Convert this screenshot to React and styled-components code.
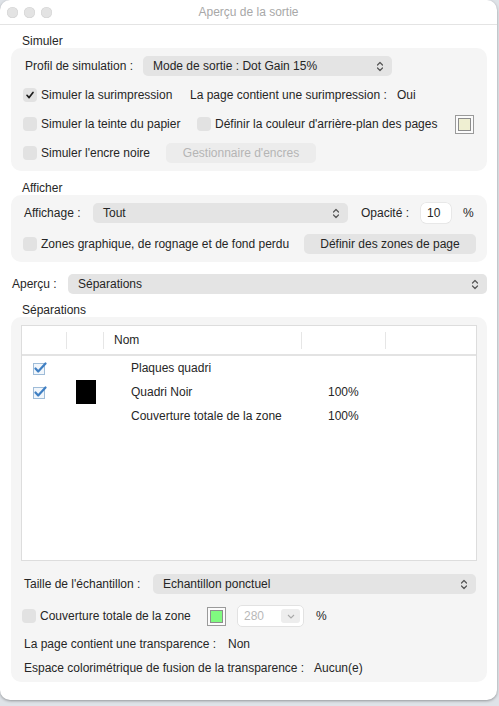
import React from "react";
import styled, { createGlobalStyle } from "styled-components";

const Global = createGlobalStyle`
  html, body { margin: 0; padding: 0; }
  body {
    background: #dfe3e8;
    font-family: "Liberation Sans", Arial, sans-serif;
    font-size: 12px;
    color: #262626;
    width: 499px;
    height: 706px;
    overflow: hidden;
  }
`;

const Window = styled.div`
  width: 497px;
  height: 700px;
  background: #ffffff;
  border-radius: 10px;
  box-shadow: 0 1px 3px rgba(0,0,0,0.35);
  display: flex;
  flex-direction: column;
  overflow: hidden;
`;

const TitleBar = styled.div`
  height: 24px;
  flex: none;
  border-bottom: 1px solid #e4e4e4;
  display: flex;
  align-items: center;
  position: relative;
  padding-left: 7px;
`;

const Lights = styled.div`
  display: flex;
  gap: 6px;
`;

const Light = styled.span`
  width: 11px;
  height: 11px;
  border-radius: 50%;
  background: #e3e3e3;
  box-shadow: inset 0 0 0 0.5px #d2d2d2;
`;

const Title = styled.div`
  flex: 1;
  text-align: center;
  color: #a8a8a8;
  font-size: 12px;
  margin-right: 52px;
`;

const Content = styled.div`
  display: flex;
  flex-direction: column;
  padding: 0 10px 0 11px;
`;

const SectionLabel = styled.div`
  height: 13px;
  line-height: 13px;
  margin-top: ${(p) => p.$mt || 11}px;
  padding-left: ${(p) => p.$pl ?? 11}px;
`;

const Group = styled.div`
  background: #f5f5f5;
  border-radius: 10px;
  padding: 8px 12px ${(p) => p.$pb || 8}px 12px;
  display: flex;
  flex-direction: column;
  gap: ${(p) => p.$gap || 9}px;
  margin-top: ${(p) => p.$mt || 0}px;
`;

const Row = styled.div`
  height: ${(p) => p.$h || 20}px;
  display: flex;
  align-items: center;
  padding-left: ${(p) => p.$pl || 0}px;
`;

const Text = styled.span`
  white-space: nowrap;
  width: ${(p) => (p.$w ? p.$w + "px" : "auto")};
  flex: none;
  color: ${(p) => (p.$muted ? "#b0b0b0" : "inherit")};
`;

const Select = styled.div`
  height: 20px;
  width: ${(p) => (p.$w ? p.$w + "px" : "auto")};
  flex: ${(p) => (p.$w ? "none" : "1")};
  background: #e4e4e4;
  border-radius: 5px;
  display: flex;
  align-items: center;
  padding: 0 8px 0 10px;
  box-sizing: border-box;
  justify-content: space-between;
`;

const Chevrons = () => (
  <svg width="8" height="11" viewBox="0 0 8 11">
    <path d="M1.5 4 L4 1.5 L6.5 4 M1.5 7 L4 9.5 L6.5 7" fill="none" stroke="#555" strokeWidth="1.2" strokeLinecap="round" strokeLinejoin="round" />
  </svg>
);

const Box = styled.span`
  width: 14px;
  height: 14px;
  border-radius: 4px;
  background: #e2e2e2;
  flex: none;
  display: flex;
  align-items: center;
  justify-content: center;
  margin-right: 4px;
`;

const Check = ({ on }) => (
  <Box>
    {on && (
      <svg width="10" height="10" viewBox="0 0 10 10">
        <path d="M2 5.3 L4.1 7.6 L8 2.4" fill="none" stroke="#1e1e1e" strokeWidth="1.7" strokeLinecap="round" strokeLinejoin="round" />
      </svg>
    )}
  </Box>
);

const Button = styled.div`
  height: 20px;
  width: ${(p) => p.$w}px;
  background: ${(p) => (p.$disabled ? "#ececec" : "#e4e4e4")};
  color: ${(p) => (p.$disabled ? "#b5b5b5" : "#262626")};
  border-radius: 5px;
  display: flex;
  align-items: center;
  justify-content: center;
  flex: none;
`;

const Swatch = styled.span`
  width: 19px;
  height: 19px;
  box-sizing: border-box;
  border: 1px solid #9a9a9a;
  background: #fbfbfb;
  display: flex;
  align-items: center;
  justify-content: center;
  flex: none;
  &::after {
    content: "";
    width: 11px;
    height: 11px;
    background: ${(p) => p.$color};
    border: 1px solid #8c8c8c;
  }
`;

const NumInput = styled.div`
  width: 30px;
  height: 20px;
  background: #fff;
  border-radius: 5px;
  box-shadow: 0 0 0 0.5px #dcdcdc;
  box-sizing: border-box;
  padding-left: 6px;
  display: flex;
  align-items: center;
  flex: none;
`;

const Combo = styled.div`
  width: 67px;
  height: 22px;
  border: 1px solid #e2e2e2;
  border-radius: 5px;
  background: #fff;
  box-sizing: border-box;
  display: flex;
  align-items: center;
  padding: 0 3px 0 6px;
  justify-content: space-between;
  color: #b8b8b8;
  flex: none;
`;

const ComboBtn = styled.span`
  width: 19px;
  height: 14px;
  background: #ededed;
  border-radius: 3px;
  display: flex;
  align-items: center;
  justify-content: center;
`;

const Table = styled.div`
  height: 236px;
  background: #fff;
  border: 1px solid #dddddd;
  box-sizing: border-box;
  display: flex;
  flex-direction: column;
  margin: 0 -1px;
`;

const Header = styled.div`
  height: 28px;
  display: flex;
  align-items: center;
  border-bottom: 2px solid #e3e3e3;
  flex: none;
`;

const HeadCell = styled.div`
  width: ${(p) => (p.$w ? p.$w + "px" : "auto")};
  flex: ${(p) => (p.$w ? "none" : "1")};
  height: 17px;
  box-sizing: border-box;
  border-right: ${(p) => (p.$last ? "none" : "1px solid #e6e6e6")};
  padding-left: ${(p) => p.$pl || 0}px;
  display: flex;
  align-items: center;
`;

const TRow = styled.div`
  height: 24px;
  display: flex;
  align-items: center;
  flex: none;
`;

const Cell = styled.div`
  width: ${(p) => p.$w}px;
  flex: none;
  height: 24px;
  display: flex;
  align-items: center;
  padding-left: ${(p) => p.$pl || 0}px;
  box-sizing: border-box;
  white-space: nowrap;
`;

const InkSwatch = styled.span`
  width: 20px;
  height: 24px;
  background: #000;
`;

const BlueCheck = () => (
  <svg width="14" height="13" viewBox="0 0 14 13">
    <rect x="0.5" y="1.5" width="11" height="11" fill="#f1f6fb" stroke="#9fbcd8" />
    <path d="M2.5 6.5 L5.2 9.5 L12.5 1.5" fill="none" stroke="#3f7fc3" strokeWidth="2.2" strokeLinecap="round" strokeLinejoin="round" />
  </svg>
);

const Spacer = styled.span`
  width: ${(p) => p.$w}px;
  flex: none;
`;

export default function App() {
  return (
    <>
      <Global />
      <Window>
        <TitleBar>
          <Lights>
            <Light />
            <Light />
            <Light />
          </Lights>
          <Title>Aperçu de la sortie</Title>
        </TitleBar>
        <Content>
          <SectionLabel $mt={10}>Simuler</SectionLabel>
          <Group>
            <Row $pl={2}>
              <Text $w={118}>Profil de simulation :</Text>
              <Select $w={249}>
                <span>Mode de sortie : Dot Gain 15%</span>
                <Chevrons />
              </Select>
            </Row>
            <Row>
              <Check on />
              <Text $w={149}>Simuler la surimpression</Text>
              <Text $w={207}>La page contient une surimpression :</Text>
              <Text>Oui</Text>
            </Row>
            <Row>
              <Check />
              <Text $w={156}>Simuler la teinte du papier</Text>
              <Check />
              <Text $w={240}>Définir la couleur d'arrière-plan des pages</Text>
              <Swatch $color="#efefd2" />
            </Row>
            <Row>
              <Check />
              <Text $w={125}>Simuler l'encre noire</Text>
              <Button $w={150} $disabled>Gestionnaire d'encres</Button>
            </Row>
          </Group>

          <SectionLabel>Afficher</SectionLabel>
          <Group $gap={11}>
            <Row $pl={1}>
              <Text $w={69}>Affichage :</Text>
              <Select $w={255}>
                <span>Tout</span>
                <Chevrons />
              </Select>
              <Spacer $w={13} />
              <Text $w={60}>Opacité :</Text>
              <NumInput>10</NumInput>
              <Spacer $w={12} />
              <Text>%</Text>
            </Row>
            <Row>
              <Check />
              <Text $w={263}>Zones graphique, de rognage et de fond perdu</Text>
              <Button $w={172}>Définir des zones de page</Button>
            </Row>
          </Group>

          <Row style={{ marginTop: 12 }} $pl={1}>
            <Text $w={56}>Aperçu :</Text>
            <Select>
              <span>Séparations</span>
              <Chevrons />
            </Select>
          </Row>

          <SectionLabel $mt={10}>Séparations</SectionLabel>
          <Group $gap={13} $pb={6} style={{ paddingRight: 11, paddingLeft: 11 }}>
            <Table>
              <Header>
                <HeadCell $w={45} />
                <HeadCell $w={37} />
                <HeadCell $w={198} $pl={10}>Nom</HeadCell>
                <HeadCell $w={84} />
                <HeadCell $last />
              </Header>
              <TRow>
                <Cell $w={45} $pl={11}><BlueCheck /></Cell>
                <Cell $w={37} />
                <Cell $w={197} $pl={27}>Plaques quadri</Cell>
              </TRow>
              <TRow>
                <Cell $w={45} $pl={11}><BlueCheck /></Cell>
                <Cell $w={37} $pl={9}><InkSwatch /></Cell>
                <Cell $w={197} $pl={27}>Quadri Noir</Cell>
                <Cell $w={84} $pl={27}>100%</Cell>
              </TRow>
              <TRow>
                <Cell $w={45} />
                <Cell $w={37} />
                <Cell $w={197} $pl={27}>Couverture totale de la zone</Cell>
                <Cell $w={84} $pl={27}>100%</Cell>
              </TRow>
            </Table>
            <Row $pl={2}>
              <Text $w={129}>Taille de l'échantillon :</Text>
              <Select>
                <span>Echantillon ponctuel</span>
                <Chevrons />
              </Select>
            </Row>
            <Row $h={22} style={{ marginTop: -2 }}>
              <Check />
              <Text $w={167}>Couverture totale de la zone</Text>
              <Swatch $color="#80fa80" />
              <Spacer $w={11} />
              <Combo>
                <span>280</span>
                <ComboBtn>
                  <svg width="8" height="5" viewBox="0 0 8 5">
                    <path d="M1 1 L4 4 L7 1" fill="none" stroke="#a9a9a9" strokeWidth="1.1" />
                  </svg>
                </ComboBtn>
              </Combo>
              <Spacer $w={12} />
              <Text>%</Text>
            </Row>
            <Row $h={16} style={{ marginTop: -4 }} $pl={2}>
              <Text $w={204}>La page contient une transparence :</Text>
              <Text>Non</Text>
            </Row>
            <Row $h={16} style={{ marginTop: -5 }} $pl={2}>
              <Text $w={290}>Espace colorimétrique de fusion de la transparence :</Text>
              <Text>Aucun(e)</Text>
            </Row>
          </Group>
        </Content>
      </Window>
    </>
  );
}
